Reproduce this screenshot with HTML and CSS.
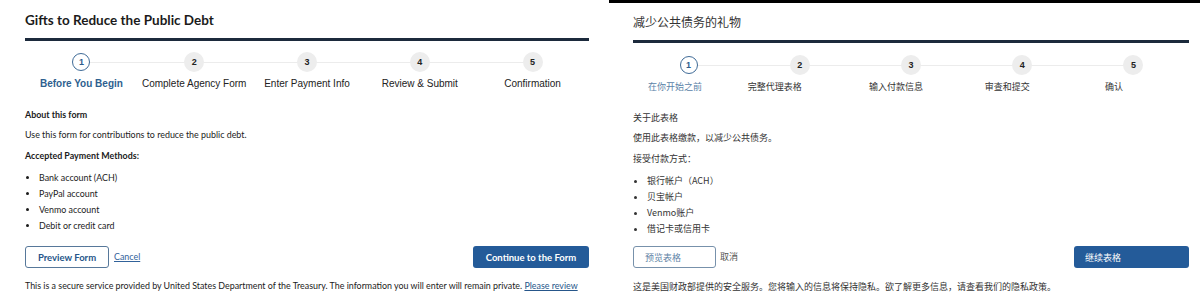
FILE: index.html
```html
<!DOCTYPE html>
<html>

<head>
    <title>Gifts to Reduce the Public Debt</title>
    <link rel="stylesheet" href="styles.css">
</head>

<body>
    <div class="panel en">
        <div class="header">
            <h1>Gifts to Reduce the Public Debt</h1>
        </div>
        <div class="steps">
            <div class="step current"><span class="num">1</span><span class="label">Before You Begin</span></div>
            <div class="step"><span class="num">2</span><span class="label">Complete Agency Form</span></div>
            <div class="step"><span class="num">3</span><span class="label">Enter Payment Info</span></div>
            <div class="step"><span class="num">4</span><span class="label">Review &amp; Submit</span></div>
            <div class="step"><span class="num">5</span><span class="label">Confirmation</span></div>
        </div>
        <div class="content">
            <p class="heading">About this form</p>
            <p class="intro">Use this form for contributions to reduce the public debt.</p>
            <p class="heading methods">Accepted Payment Methods:</p>
            <ul>
                <li>Bank account (ACH)</li>
                <li>PayPal account</li>
                <li>Venmo account</li>
                <li>Debit or credit card</li>
            </ul>
            <div class="actions">
                <button class="btn outline">Preview Form</button>
                <a href="#" class="cancel">Cancel</a>
                <button class="btn primary">Continue to the Form</button>
            </div>
            <p class="footer">This is a secure service provided by United States Department of the Treasury. The information you will enter will remain private. <a href="#">Please review</a><br><a href="#">our Privacy Policy</a> for more information.</p>
        </div>
    </div>

    <div class="panel zh">
        <div class="header">
            <h1>减少公共债务的礼物</h1>
        </div>
        <!-- translated labels keep the left edge of the english ones -->
        <div class="steps">
            <div class="step current"><span class="num">1</span><span class="label s1">在你开始之前</span></div>
            <div class="step"><span class="num">2</span><span class="label s2">完整代理表格</span></div>
            <div class="step"><span class="num">3</span><span class="label s3">输入付款信息</span></div>
            <div class="step"><span class="num">4</span><span class="label s4">审查和提交</span></div>
            <div class="step"><span class="num">5</span><span class="label s5">确认</span></div>
        </div>
        <div class="content">
            <p class="heading">关于此表格</p>
            <p class="intro">使用此表格缴款，以减少公共债务。</p>
            <p class="heading methods">接受付款方式：</p>
            <ul>
                <li>银行帐户（ACH）</li>
                <li>贝宝帐户</li>
                <li>Venmo账户</li>
                <li>借记卡或信用卡</li>
            </ul>
            <div class="actions">
                <button class="btn outline">预览表格</button>
                <a href="#" class="cancel">取消</a>
                <button class="btn primary">继续表格</button>
            </div>
            <p class="footer">这是美国财政部提供的安全服务。您将输入的信息将保持隐私。欲了解更多信息，请查看我们的隐私政策。</p>
        </div>
    </div>
</body>
</html>
```

FILE: styles.css
```css
body {
    margin: 0;
    display: flex;
    overflow: hidden;
    background: #fff;
    color: #1b1b1b;
    font-family: Lato, sans-serif;
}

p {
    margin: 0;
}

/* panels */

.panel {
    box-sizing: border-box;
}

.en {
    width: 609px;
    padding: 0 20px 0 25px;
}

.zh {
    flex: 1;
    border-top: 3px solid #000;
    padding: 0 11px 0 24px;
    color: #333;
    font-family: "Noto Sans CJK SC", sans-serif;
}

/* header */

.header {
    border-bottom: 3px solid #1c2a3c;
}

h1 {
    margin: 0;
    font-size: 13.5px;
    line-height: 20px;
}

.en .header {
    padding: 10px 0 8px;
}

.zh .header {
    padding: 9px 0 8px;
}

.zh h1 {
    font-weight: normal;
    font-size: 12px;
    color: #333;
}

/* stepper */

.steps {
    display: flex;
    font-family: "Liberation Sans", Arial, sans-serif;
}

.en .steps {
    margin-top: 11px;
}

.zh .steps {
    margin-top: 12px;
}

.step {
    flex: 1;
    display: flex;
    flex-direction: column;
    align-items: center;
    position: relative;
}

.step + .step::before {
    content: "";
    position: absolute;
    top: 10px;
    left: -50%;
    right: 50%;
    height: 1px;
    background: #ececec;
}

.num {
    width: 20px;
    height: 20px;
    border-radius: 50%;
    background: #ededed;
    display: flex;
    align-items: center;
    justify-content: center;
    font-size: 9px;
    font-weight: bold;
    color: #222;
    position: relative;
    z-index: 1;
}

.current .num {
    box-sizing: border-box;
    width: 18px;
    height: 18px;
    margin: 1px 0;
    background: #fff;
    border: 1.5px solid #3f6b97;
    color: #2f5d8c;
}

.label {
    margin-top: 5px;
    font-size: 10px;
    line-height: 14px;
    color: #222;
    white-space: nowrap;
}

.en .current .label {
    font-weight: bold;
    color: #2e5f8f;
}

.zh .label {
    font-family: "Noto Sans CJK SC", sans-serif;
    font-size: 9px;
    color: #333;
    text-align: left;
}

.zh .current .label {
    color: #5b83a8;
}

.s1 { width: 81px; }
.s2 { width: 104px; }
.s3 { width: 84px; }
.s4 { width: 75px; }
.s5 { width: 57px; }

/* content */

.content {
    font-size: 8.9px;
    line-height: 16px;
}

.en .content {
    margin-top: 16px;
}

.zh .content {
    margin-top: 16px;
    font-size: 9px;
}

.heading {
    font-weight: bold;
}

.zh .heading {
    font-weight: normal;
}

.intro {
    margin-top: 4px;
}

.methods {
    margin-top: 5px;
}

ul {
    margin: 6px 0 0;
    padding-left: 14px;
}

.zh ul {
    margin-top: 6px;
    padding-left: 14px;
}

.actions {
    display: flex;
    align-items: center;
    margin-top: 12px;
}

.zh .actions {
    margin-top: 9px;
}

.btn {
    box-sizing: border-box;
    height: 22px;
    border-radius: 3px;
    font-family: inherit;
    font-size: 9.5px;
    font-weight: bold;
    cursor: pointer;
}

.outline {
    width: 84px;
    background: #fff;
    border: 1.5px solid #57789a;
    color: #26568a;
}

.primary {
    margin-left: auto;
    width: 116px;
    background: #245b99;
    border: 0;
    color: #fff;
}

.zh .btn {
    font-weight: normal;
    font-size: 9px;
    text-align: left;
    padding-left: 11px;
}

.zh .outline {
    width: 83px;
    color: #5e82a5;
    border-color: #7791ab;
}

.zh .primary {
    width: 115px;
}

.cancel {
    margin-left: 5px;
    color: #31629a;
}

.zh .cancel {
    margin-left: 4px;
    color: #555;
    text-decoration: none;
}

.footer {
    margin-top: 10px;
}

.footer a {
    color: #26568a;
}

.zh .footer {
    margin-top: 11px;
}
```
